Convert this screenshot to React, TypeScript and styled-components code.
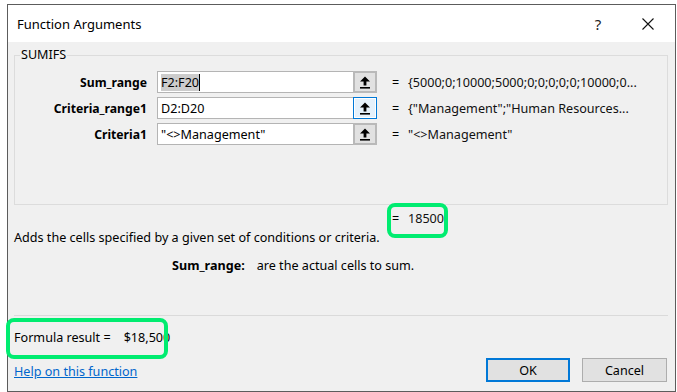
import React from 'react';
import styled, { createGlobalStyle } from 'styled-components';

const GlobalStyle = createGlobalStyle`
  html, body {
    margin: 0;
    padding: 0;
    background: #ffffff;
  }
  body {
    font-family: "Segoe UI", "Noto Sans", "Open Sans", sans-serif;
    font-size: 12.6px;
    color: #000000;
  }
`;

const Window = styled('div')`
  position: relative;
  box-sizing: border-box;
  margin: 4px 0 0 7px;
  width: 669px;
  height: 388px;
  border: 1px solid #5c5c5c;
  display: flex;
  flex-direction: column;
  background: #f0f0f0;
`;

const TitleBar = styled('div')`
  height: 37px;
  background: #ffffff;
  display: flex;
  align-items: center;
  padding-left: 9px;
  font-size: 13px;
`;

const TitleText = styled('div')`
  flex: 1;
`;

const TitleButton = styled('div')<{ $w: number }>`
  width: ${(p) => p.$w}px;
  display: flex;
  justify-content: center;
  align-items: center;
  font-size: 15px;
  color: #222;
`;

const Body = styled('div')`
  flex: 1;
  display: flex;
  flex-direction: column;
  padding: 0 7px 0 6px;
`;

const Group = styled('fieldset')`
  margin: 5px 0 0 0;
  padding: 8px 0 0 0;
  height: 158px;
  box-sizing: border-box;
  border: 1px solid #dcdcdc;
  min-width: 0;
  legend {
    margin-left: 5px;
    padding: 0 1px;
    line-height: 16px;
  }
`;

const ArgRow = styled('div')`
  display: flex;
  align-items: center;
  height: 22px;
  margin-bottom: 4px;
`;

const ArgLabel = styled('div')`
  width: 132px;
  margin-right: 10px;
  text-align: right;
  font-weight: bold;
  font-size: 12.2px;
`;

const InputWrap = styled('div')`
  width: 220px;
  height: 22px;
  display: flex;
`;

const Field = styled('div')`
  flex: 1;
  box-sizing: border-box;
  background: #ffffff;
  border: 1px solid #b4b4b4;
  border-right: none;
  display: flex;
  align-items: center;
  padding-left: 3px;
  white-space: nowrap;
  overflow: hidden;
`;

const Selected = styled('span')`
  background: #cccccc;
  border-right: 1px solid #000;
`;

const RefButton = styled('div')<{ $focus?: boolean }>`
  width: 24px;
  box-sizing: border-box;
  display: flex;
  justify-content: center;
  align-items: center;
  background: ${(p) => (p.$focus ? '#e5f1fb' : '#e1e1e1')};
  border: ${(p) => (p.$focus ? '1px solid #0078d7' : '2px solid #b9b9b9')};
  box-shadow: ${(p) => (p.$focus ? 'inset 0 0 0 1px #ffffff' : 'none')};
`;

const Eq = styled('div')`
  margin-left: 15px;
  width: 16px;
`;

const Value = styled('div')`
  white-space: nowrap;
  color: #111;
`;

const ResultRow = styled('div')`
  margin-top: 6px;
  padding-left: 378px;
  display: flex;
  line-height: 16px;
`;

const Description = styled('div')`
  margin-top: 3px;
  line-height: 16px;
`;

const ArgHelp = styled('div')`
  margin-top: 12px;
  padding-left: 158px;
  line-height: 16px;
  b {
    margin-right: 12px;
  }
`;

const Separator = styled('div')`
  margin-top: 41px;
  height: 1px;
  background: #dadada;
`;

const FormulaResult = styled('div')`
  margin-top: 14px;
  line-height: 16px;
  span {
    margin-left: 13px;
  }
`;

const BottomRow = styled('div')`
  margin-top: 12px;
  display: flex;
  justify-content: space-between;
  align-items: center;
  padding-right: 1px;
`;

const HelpLink = styled('a')`
  color: #0066cc;
  text-decoration: underline;
  padding-top: 3px;
  cursor: pointer;
`;

const Buttons = styled('div')`
  display: flex;
  gap: 12px;
`;

const DialogButton = styled('button')<{ $default?: boolean }>`
  width: ${(p) => (p.$default ? 84 : 85)}px;
  height: 24px;
  box-sizing: border-box;
  font: inherit;
  color: #000;
  background: #e1e1e1;
  border: ${(p) => (p.$default ? '2px solid #0078d7' : '1px solid #adadad')};
  padding: 0;
`;

const Highlight = styled('div')<{ $x: number; $y: number; $w: number; $h: number }>`
  position: absolute;
  left: ${(p) => p.$x}px;
  top: ${(p) => p.$y}px;
  width: ${(p) => p.$w}px;
  height: ${(p) => p.$h}px;
  box-sizing: border-box;
  border: 4px solid #00ec70;
  border-radius: 8px;
  pointer-events: none;
`;

function RefArrow() {
  return (
    <svg width="12" height="13" viewBox="0 0 12 13">
      <path d="M6 0.5 L11 5.5 L7.4 5.5 L7.4 9.5 L4.6 9.5 L4.6 5.5 L1 5.5 Z" fill="#000" />
      <rect x="1" y="11" width="10" height="1.6" fill="#000" />
    </svg>
  );
}

function CloseIcon() {
  return (
    <svg width="12" height="12" viewBox="0 0 12 12">
      <path d="M0.5 0.5 L11.5 11.5 M11.5 0.5 L0.5 11.5" stroke="#111" strokeWidth="1.1" />
    </svg>
  );
}

const ARGS = [
  { label: 'Sum_range', value: '{5000;0;10000;5000;0;0;0;0;0;10000;0...', input: 'F2:F20', selected: true },
  { label: 'Criteria_range1', value: '{"Management";"Human Resources...', input: 'D2:D20', focus: true },
  { label: 'Criteria1', value: '"<>Management"', input: '"<>Management"' },
];

export default function App() {
  return (
    <>
      <GlobalStyle />
      <Window>
        <TitleBar>
          <TitleText>Function Arguments</TitleText>
          <TitleButton $w={46}>?</TitleButton>
          <TitleButton $w={54}>
            <CloseIcon />
          </TitleButton>
        </TitleBar>
        <Body>
          <Group>
            <legend>SUMIFS</legend>
            {ARGS.map((a) => (
              <ArgRow key={a.label}>
                <ArgLabel>{a.label}</ArgLabel>
                <InputWrap>
                  <Field>{a.selected ? <Selected>{a.input}</Selected> : a.input}</Field>
                  <RefButton $focus={a.focus}>
                    <RefArrow />
                  </RefButton>
                </InputWrap>
                <Eq>=</Eq>
                <Value>{a.value}</Value>
              </ArgRow>
            ))}
          </Group>
          <ResultRow>
            <Eq style={{ marginLeft: 0 }}>=</Eq>
            <Value>18500</Value>
          </ResultRow>
          <Description>Adds the cells specified by a given set of conditions or criteria.</Description>
          <ArgHelp>
            <b>Sum_range:</b>are the actual cells to sum.
          </ArgHelp>
          <Separator />
          <FormulaResult>
            Formula result =<span>$18,500</span>
          </FormulaResult>
          <BottomRow>
            <HelpLink>Help on this function</HelpLink>
            <Buttons>
              <DialogButton $default>OK</DialogButton>
              <DialogButton>Cancel</DialogButton>
            </Buttons>
          </BottomRow>
        </Body>
        <Highlight $x={379} $y={198} $w={61} $h={35} />
        <Highlight $x={-2} $y={313} $w={162} $h={41} />
      </Window>
    </>
  );
}
